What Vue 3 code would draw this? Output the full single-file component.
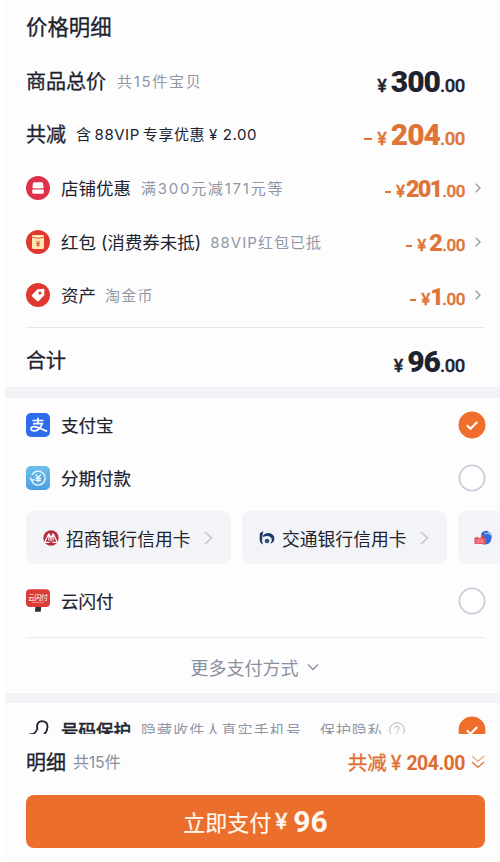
<script setup>
const discounts = [
  { icon: 'shop', name: '店铺优惠', note: '满300元减171元等', whole: '201', noteClass: 'note-shop', wholeClass: 'tight' },
  { icon: 'packet', name: '红包 (消费券未抵)', note: '88VIP红包已抵', whole: '2', noteClass: 'note-packet', wholeClass: '' },
  { icon: 'tag', name: '资产', note: '淘金币', whole: '1', noteClass: 'note-tag', wholeClass: 'slim' },
]
</script>

<template>
  <main class="page">
    <section class="prices">
      <h1 class="title">价格明细</h1>
      <div class="row">
        <span class="label">商品总价</span>
        <span class="sub note-items">共15件宝贝</span>
        <span class="price"><i class="yen">¥</i><b class="whole">300</b><i class="cents">.00</i></span>
      </div>
      <div class="row">
        <span class="label">共减</span>
        <span class="vip">含<em class="gap"></em>88VIP<em class="gap"></em>专享优惠<em class="coin">¥</em>2.00</span>
        <span class="price orange"><i class="dash"></i><i class="yen">¥</i><b class="whole">204</b><i class="cents">.00</i></span>
      </div>
      <div v-for="d in discounts" :key="d.icon" class="row">
        <svg class="icon" viewBox="0 0 24 24">
          <circle cx="12" cy="12" r="12" :fill="d.icon === 'shop' ? '#de3048' : '#e0382f'" />
          <g v-if="d.icon === 'shop'" fill="#fff">
            <path d="M8.300 6.200h7.400q1 0 1.300 1l.6 4.200q-1.100 1.700-2.500.5-1.500 1.200-3.100 0-1.600 1.200-3.100 0-1.400 1.200-2.500-.5L7 7.200q.3-1 1.300-1z" />
            <path d="M6.200 13.600h11.600v2.600q0 1.600-1.600 1.600H7.800q-1.600 0-1.600-1.600z" />
          </g>
          <g v-else-if="d.icon === 'packet'">
            <path d="M7 5h10q1 0 1 1v11.500q0 1.500-1.500 1.500h-9Q6 19 6 17.500V6q0-1 1-1z" fill="#fde6b4" />
            <path d="M6 7.200q6 2.200 12 0" fill="none" stroke="#d3603f" stroke-width="1" />
            <path d="m10.200 10.800 1.800 2.300 1.800-2.300M12 12.800v3.700m-1.800-2.900h3.600m-3.600 1.500h3.600" fill="none" stroke="#d44336" stroke-width=".9" />
          </g>
          <g v-else>
            <path d="M12.200 6.300 17.400 5.800q1-.1 1 .9l-.2 5.200q0 .7-.5 1.200l-5 4.800q-.8.700-1.600 0l-5-4.400q-.9-.8-.1-1.600l5.100-5.100q.4-.5 1.100-.5z" fill="#fff" />
            <circle cx="14" cy="10" r="1.600" fill="#e0382f" />
          </g>
        </svg>
        <span class="name thin">{{ d.name }}</span>
        <span class="sub" :class="d.noteClass">{{ d.note }}</span>
        <span class="price orange small"><i class="dash"></i><i class="yen">¥</i><b class="whole" :class="d.wholeClass">{{ d.whole }}</b><i class="cents">.00</i></span>
        <svg class="arrow" viewBox="0 0 6 10"><path d="m.8.8 4.200 4.200-4.200 4.200" /></svg>
      </div>
      <div class="row total">
        <span class="label">合计</span>
        <span class="price"><i class="yen">¥</i><b class="whole">96</b><i class="cents">.00</i></span>
      </div>
    </section>

    <section class="methods">
      <div class="row">
        <svg class="icon" viewBox="0 0 24 24">
          <rect width="24" height="24" rx="5" fill="#2f6cec" />
          <path d="M6.500 7.500h11M12 4.800v5.600M7 10.600h9.300c-1.100 3.600-4.200 7.300-7.900 7.300-4.500 0-4.300-4.400-.6-4.300 4.300.1 8.400 2.800 13.400 4.700" fill="none" stroke="#fff" stroke-width="1.700" />
        </svg>
        <span class="name">支付宝</span>
        <svg class="radio" viewBox="0 0 28 28"><circle cx="14" cy="14" r="13.500" fill="#f06e2b" /><path d="m8.800 14.200 3.700 3.600 6.700-6.700" fill="none" stroke="#fff" stroke-width="2.100" /></svg>
      </div>
      <div class="row">
        <svg class="icon" viewBox="0 0 24 24">
          <defs><linearGradient id="sky" x2="0" y2="1"><stop stop-color="#6fbde9" /><stop offset="1" stop-color="#4a9fdf" /></linearGradient></defs>
          <rect width="24" height="24" rx="5" fill="url(#sky)" />
          <path d="M5.600 14.500a7 7 0 1 0 .4-5.700M4.300 11.600l1.300 2.900 2.800-1" fill="none" stroke="#e9f8ff" stroke-width="1.400" />
          <path d="m9.500 8.500 2.700 3.200 2.700-3.200M12.200 11.500v4.700m-2.800-3.700H15m-5.600 1.900H15" fill="none" stroke="#e9f8ff" stroke-width="1.300" />
        </svg>
        <span class="name">分期付款</span>
        <svg class="radio" viewBox="0 0 28 28"><circle cx="14" cy="14" r="12.600" fill="#fff" stroke="#ccceda" stroke-width="1.900" /></svg>
      </div>
      <div class="cards">
        <div class="card">
          <svg class="bank" viewBox="0 0 16 16">
            <circle cx="8" cy="8" r="7.700" fill="#b52d40" />
            <path d="m1.600 12.400 4-8.400h.6L8 8l1.800-4h.6l4 8.400M5.900 5v5.500m4.200-5.500v5.500M8 8.600v2.800M2 12.400h4.500m3 0H14" fill="none" stroke="#fff" stroke-width="1.150" />
          </svg>
          <span>招商银行信用卡</span>
          <svg class="next" viewBox="0 0 9 14"><path d="m1 1 6.500 6L1 13" /></svg>
        </div>
        <div class="card">
          <svg class="bank" viewBox="0 0 16 16">
            <path d="M.8 3.200 4.300 1 3.300 7q-.8 4 .6 7.600Q.8 13.200.6 9z" fill="#21386c" />
            <path d="M4.200 5.200Q7 2.300 11 3.200q4.300 1.200 4.400 5.200-.1 4.200-4.300 5.300 2.600-3.200 1.200-5.700-2.300-3.400-8.300-1z" fill="#21386c" />
            <circle cx="8" cy="11" r="2.300" fill="#2d527f" />
          </svg>
          <span>交通银行信用卡</span>
          <svg class="next" viewBox="0 0 9 14"><path d="m1 1 6.500 6L1 13" /></svg>
        </div>
        <div class="card">
          <svg class="bank wide" viewBox="0 0 18 16">
            <path d="M7.200 3.200Q10 .2 14 1l3 2.800q1.700 4.800-1 8.400-2.600 3.200-7.400 2z" fill="#326bd5" />
            <path d="m10.500 2.800 1.700 1.300 2.500-2.300.5 2.400 1.800.3" fill="none" stroke="#dce9fc" stroke-width=".9" />
            <path d="M.4 8 3.500 6.600 4 8l3-.4V5.300h2v2.200l2.800.4v6.200H.6z" fill="#e65360" />
            <path d="M2 10.200h8m-8 2h8M4.700 9v4m3-4v4" fill="none" stroke="#f5a4ab" stroke-width=".7" />
          </svg>
          <span>花呗分期付款</span>
        </div>
      </div>
      <div class="row cloud">
        <svg class="icon" viewBox="0 0 24 24">
          <path d="M9.400 17h6l-.7 5.700H9z" fill="#343139" />
          <rect y=".3" width="24" height="17.700" rx="4" fill="#dc3c36" />
          <text x="2" y="10.500" textLength="20" font-size="7" fill="#fff">云闪付</text>
          <path d="M6 13.300h12" stroke="#f0a39d" stroke-width=".8" />
        </svg>
        <span class="name">云闪付</span>
        <svg class="radio" viewBox="0 0 28 28"><circle cx="14" cy="14" r="12.600" fill="#fff" stroke="#ccceda" stroke-width="1.900" /></svg>
      </div>
      <div class="more">
        <span>更多支付方式</span>
        <svg viewBox="0 0 12 8"><path d="m1 1.500 5 5 5-5" /></svg>
      </div>
    </section>

    <section class="privacy">
      <div class="row">
        <svg class="icon" viewBox="0 0 24 24"><path d="M3.500 16.200h2.800q2.900-.4 5-5.200-1.300-6.700 4.200-7.800 6.400.1 6 6-.4 5.300-4.700 8.300" fill="none" stroke="#20222e" stroke-width="1.800" /></svg>
        <span class="name heavy">号码保护</span>
        <span class="sub hide">隐藏收件人真实手机号</span>
        <span class="sub guard">保护隐私</span>
        <svg class="help" viewBox="0 0 16 16"><circle cx="8" cy="8" r="7.300" /><path d="M5.800 6.400q0-2.200 2.200-2.200t2.200 1.900q0 1.200-1.200 1.900-1 .6-1 1.500m0 1.300v1.300" /></svg>
        <svg class="radio" viewBox="0 0 28 28"><circle cx="14" cy="14" r="13.500" fill="#f06e2b" /><path d="m8.800 14.200 3.700 3.600 6.700-6.700" fill="none" stroke="#fff" stroke-width="2.100" /></svg>
      </div>
    </section>

    <footer class="checkout">
      <div class="summary">
        <span class="label">明细</span>
        <span class="count">共15件</span>
        <span class="saved">共减<em class="coin">¥</em><b>204.00</b></span>
        <svg class="double" viewBox="0 0 14 14"><path d="m1 1 6 5.300L13 1" opacity=".6" /><path d="m1 7 6 5.300L13 7" /></svg>
      </div>
      <button class="pay">立即支付<em class="coin">¥</em><b>96</b></button>
    </footer>
  </main>
</template>

<style>
body { background: #fff; overflow: hidden; }
</style>

<style scoped>
.page {
  width: 495px; height: 862px; margin-left: 5px; overflow: hidden; box-sizing: border-box;
  display: flex; flex-direction: column; background: #fdfdfe; color: #20222e;
  font-family: Inter, "Noto Sans CJK SC", sans-serif; white-space: nowrap;
}
i, em { font-style: normal; }
.prices { height: 387px; box-sizing: border-box; padding: 0 15px 0 21px; flex: none; }
.title { margin: 0; height: 54px; line-height: 55px; font-size: 21.400px; font-weight: 400; -webkit-text-stroke: .3px; }
.row { display: flex; align-items: center; height: 53.600px; }
.label { font-size: 20px; -webkit-text-stroke: .3px; padding-bottom: 1px; }
.sub { font-size: 15px; color: #9196a6; margin-left: 10px; letter-spacing: 1.200px; padding-bottom: 1px; }
.note-items { margin-left: 11px; letter-spacing: 1.700px; }
.note-shop { letter-spacing: 1.750px; }
.note-packet { margin-left: 9px; letter-spacing: 1.050px; }
.note-tag { margin-left: 9px; }
.vip { font-size: 15px; margin-left: 10px; letter-spacing: .55px; padding-bottom: 2px; }
.gap { display: inline-block; width: 3px; }
.coin { margin: 0 5px 0 4px; }
.price { margin-left: auto; padding-right: 20px; display: flex; align-items: baseline; font-family: Roboto, sans-serif; font-weight: 700; line-height: 34px; padding-top: 6px; }
.yen { font-size: 18px; font-weight: 500; -webkit-text-stroke: .3px; margin-right: 4px; }
.whole { font-size: 30px; letter-spacing: -1px; }
.cents { font-size: 18.500px; letter-spacing: -.4px; font-weight: 500; -webkit-text-stroke: .35px; }
.orange { color: #df7437; }
.dash { width: 8px; height: 2px; background: currentColor; align-self: center; margin: 4px 5px 0 0; }
.small .whole { font-size: 23.500px; letter-spacing: -.8px; }
.small .whole.tight { letter-spacing: -1.900px; margin-right: 1px; margin-left: -2px; }
.small .whole.slim { margin-left: -3px; margin-right: -1px; }
.small .cents, .small .yen { font-size: 17px; }
.small .yen { margin-right: 3px; }
.small .dash { width: 6px; margin-right: 5px; }
.small { padding-right: 10px; padding-top: 5px; }
.arrow { width: 6px; height: 10px; margin-right: 4px; fill: none; stroke: #9498a5; stroke-width: 1.300; }
.icon { width: 24px; height: 24px; flex: none; margin-right: 11px; overflow: visible; }
.name { font-size: 17.500px; -webkit-text-stroke: .2px; padding-bottom: 1px; }
.thin { -webkit-text-stroke: 0; }
.total { border-top: 1px solid #e7e8ec; margin-top: 5px; height: 67px; }
.total .label { padding-bottom: 3px; }
.methods { height: 306px; box-sizing: border-box; flex: none; border-top: 11px solid #f2f3f7; padding: 0 15px 0 21px; overflow: hidden; }
.radio { width: 28px; height: 28px; flex: none; margin-left: auto; margin-right: -1px; }
.cards { display: flex; gap: 11px; margin-top: 6px; }
.card { width: 205px; height: 53px; box-sizing: border-box; border-radius: 8px; background: #f3f4f7; flex: none; display: flex; align-items: center; padding: 0 18px 0 17px; font-size: 17.800px; }
.bank { width: 16px; height: 16px; margin-right: 7px; flex: none; }
.wide { width: 18px; margin: 0 7px 0 -1px; }
.next { width: 9px; height: 14px; margin-left: auto; fill: none; stroke: #c3c6cd; stroke-width: 1.600; }
.cloud { height: 73px; margin-top: 1px; border-bottom: 1px solid #e9eaee; box-sizing: border-box; }
.more { display: flex; align-items: center; justify-content: center; height: 57px; color: #8b8f9f; font-size: 18px; gap: 8px; padding-right: 2px; }
.more svg { width: 12px; height: 8px; fill: none; stroke: #8b8f9f; stroke-width: 1.300; }
.privacy { height: 41px; box-sizing: border-box; flex: none; border-top: 10px solid #f2f3f7; overflow: hidden; padding: 0 15px 0 21px; }
.heavy { -webkit-text-stroke: .6px; padding: 0; }
.hide { letter-spacing: 1.100px; padding: 0; }
.guard { margin-left: 18px; letter-spacing: .9px; padding: 0; }
.help { width: 16px; height: 16px; margin-left: 5px; fill: none; stroke: #b2b6c0; }
.checkout { padding: 0 15px 0 21px; }
.summary { height: 61px; display: flex; align-items: center; padding-bottom: 6px; box-sizing: border-box; }
.count { color: #8b8f9b; font-size: 16px; margin-left: 7px; letter-spacing: -.2px; padding-bottom: 2px; }
.saved { margin-left: auto; color: #dd6d30; font-size: 19.500px; -webkit-text-stroke: .3px; padding-bottom: 1px; }
.saved b { font: 700 19.500px Roboto, sans-serif; letter-spacing: -.5px; -webkit-text-stroke: 0; }
.double { width: 14px; height: 14px; margin-left: 6px; fill: none; stroke: #dd7a42; stroke-width: 1.300; }
.pay { display: flex; width: 459px; height: 53px; border: 0; border-radius: 8px; padding: 0 0 1px; background: #eb6e2d; color: #fff8ef; align-items: center; justify-content: center; font-family: inherit; font-size: 22px; -webkit-text-stroke: .2px; }
.pay .coin { margin-right: 6px; -webkit-text-stroke: .6px; }
.pay b { font: 700 30px Roboto, sans-serif; -webkit-text-stroke: 0; }
</style>
